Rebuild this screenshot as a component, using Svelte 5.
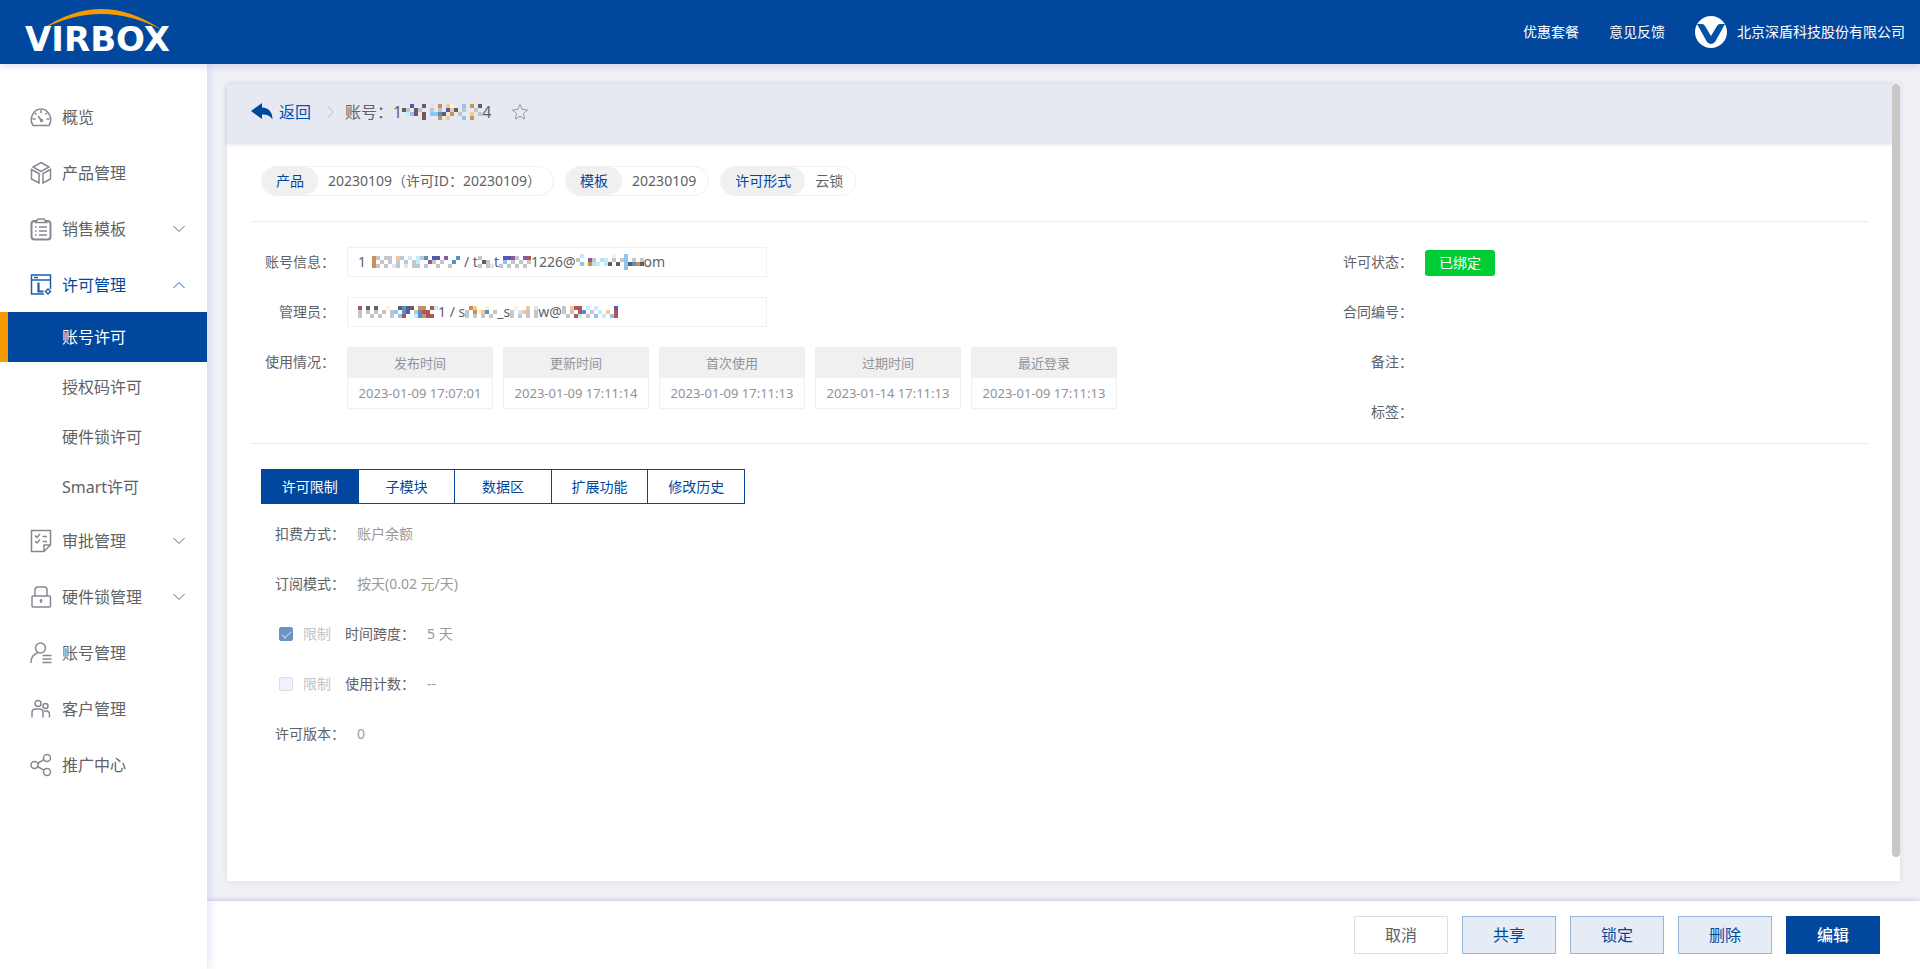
<script>
	let activeTab = '许可限制';

	const menu = [
		{ name: '概览', icon: 'gauge' },
		{ name: '产品管理', icon: 'box' },
		{ name: '销售模板', icon: 'clipboard', arrow: 'down' },
		{
			name: '许可管理',
			icon: 'license',
			arrow: 'up',
			children: ['账号许可', '授权码许可', '硬件锁许可', 'Smart许可']
		},
		{ name: '审批管理', icon: 'approve', arrow: 'down' },
		{ name: '硬件锁管理', icon: 'lock', arrow: 'down' },
		{ name: '账号管理', icon: 'account' },
		{ name: '客户管理', icon: 'customer' },
		{ name: '推广中心', icon: 'share' }
	];

	const tags = [
		{ label: '产品', value: '20230109（许可ID：20230109）' },
		{ label: '模板', value: '20230109' },
		{ label: '许可形式', value: '云锁' }
	];

	const usage = [
		{ label: '发布时间', value: '2023-01-09 17:07:01' },
		{ label: '更新时间', value: '2023-01-09 17:11:14' },
		{ label: '首次使用', value: '2023-01-09 17:11:13' },
		{ label: '过期时间', value: '2023-01-14 17:11:13' },
		{ label: '最近登录', value: '2023-01-09 17:11:13' }
	];

	const tabs = ['许可限制', '子模块', '数据区', '扩展功能', '修改历史'];

	// masked parts of private values, one letter per 4px tile
	const palette = {
		k: '#5f6062',
		g: '#c4c6cb',
		e: '#e3e4e7',
		b: '#5590cc',
		s: '#8cc4f2',
		l: '#c3ecff',
		n: '#5558b0',
		p: '#8a5a9c',
		o: '#c8935a',
		c: '#f5c98f',
		y: '#fdf3cc',
		r: '#b05454',
		m: '#7b5658',
		t: '#c3e2dc'
	};

	const masks = {
		title: ['..n..m.e.o.cy..s.o.k', 'kg.kg..g.g.nck.g..g.', '.lsm.m.ssbk.o.g..c.g', '.....m...o.c...s.o..'],
		phone: ['og.gg.cg.l.lgb.nn.p..b', 'o.g.g.g.g.gl..pg.g..b.', 'og.g.eg.e.gg.g..g..g..'],
		mailName: ['g...', '.kg.', 'g.ge'],
		mailYear: ['.nnpg.pr', '.s.g.g.g', 'g.g.g.g.'],
		mailHost: ['.l.......y..s....', 'g..pg.tl.g.gs.g.g', '.syotl.lk.k.skbok', '............s....'],
		admin: ['r.k.k..y..kbkk.oo.rl', 'g.g.g.g.gs.bn.gbrr..', 'g..g.g..g.sr..lborr.'],
		adminMid: ['.oc..y..', 'g.oycb.g', 'g.g.g.g.'],
		adminName: ['.y..c.e', 'g.lcg.g', 'g.g.g.g'],
		adminHost: ['g.crr.l.l....n', 'g.g.rb.g.l.c.r', '.g.rl.g.s.l.sr']
	};
</script>

{#snippet mosaic(rows)}
	<svg class="mosaic" width={rows[0].length * 4} height={rows.length * 4} aria-hidden="true">
		{#each rows as row, y}
			{#each row.split('') as tile, x}
				{#if palette[tile]}
					<rect x={x * 4} y={y * 4} width="4" height="4" fill={palette[tile]} />
				{/if}
			{/each}
		{/each}
	</svg>
{/snippet}

{#snippet menuIcon(name)}
	<svg class="menu-icon" viewBox="0 0 22 24" width="22" height="24">
		{#if name === 'gauge'}
			<path d="M3 20.5C1 17.5 .8 13 2.6 9.600C4.300 6.200 7.500 4 11 4s6.700 2.200 8.400 5.600C21.200 13 21 17.500 19 20.500Z" />
			<path d="M11 5v3M5 8l1.500 1.500M17 8l-1.500 1.500M2.500 14h3M16.500 14h3M8 11l3 4" />
			<circle cx="11.500" cy="15.500" r="1" />
		{:else if name === 'box'}
			<path d="M11 1.500 19 6l-8 4.500L3 6ZM1.500 8.500l7.500 4v9.500l-7.500-4ZM20.500 8.500l-7.500 4v9.500l7.500-4Z" />
		{:else if name === 'clipboard'}
			<rect x="1.500" y="4" width="19" height="18.500" rx="3" stroke-width="2" />
			<path d="M5.500 5.500 8 2h6l2.500 3.500Z" fill="#fff" />
			<path d="M5 10h1.500M9 10h8M5 14h1.500M9 14h8M5 18h1.500M9 18h8" />
		{:else if name === 'license'}
			<path d="M14 21H1.500V2h19v14M1.500 7h19M4 4.500h4" />
			<path d="M8.500 9.500v9h5" stroke-width="2.200" />
			<path d="m18 16 2.500 2.500L18 21l-2.500-2.500Z" />
		{:else if name === 'approve'}
			<path d="M14 22.500H1.500v-21h19V16ZM14 22.500V16h6.500" />
			<path d="m5 6.500 2 2L10 5m-5 7 2 2 3-3.500M12.500 7.500H17M12.500 12.500H17" />
		{:else if name === 'lock'}
			<rect x="2" y="11" width="18.500" height="11" rx="1" />
			<path d="M5 11V5q0-3 3-3h6q3 0 3 3v6M11 15.500V18" />
			<circle cx="11" cy="15.500" r=".7" />
		{:else if name === 'account'}
			<circle cx="10.500" cy="7" r="5" />
			<path d="M1 22c0-5 2.500-9 7-10.500M12.500 14.500h9M12.500 18h9M12.500 21.500h9" />
		{:else if name === 'customer'}
			<circle cx="8" cy="6.500" r="3" />
			<circle cx="15.500" cy="9" r="2.500" />
			<path d="M2 20.500v-5q0-3.500 3.500-3.500h4q3.500 0 3.500 3.500v5M14 14h2q3.500 0 3.500 3.500v3" />
		{:else if name === 'share'}
			<circle cx="4.500" cy="12" r="3.500" />
			<circle cx="17" cy="5" r="3.500" />
			<circle cx="17" cy="19" r="3.500" />
			<path d="m7.500 10.500 6-3.700M7.500 13.500l6.200 3.700" />
		{/if}
	</svg>
{/snippet}

<div class="page">
	<header class="topbar">
		<a class="logo" href="#home" aria-label="VIRBOX">
			<svg width="180" height="64" viewBox="0 0 180 64">
				<path d="M26 30Q86-12 147 30Q86-2 26 30Z" fill="#f59a00" />
				<text x="10" y="51">VIRBOX</text>
			</svg>
		</a>
		<nav class="top-links">
			<a href="#plans">优惠套餐</a>
			<a href="#feedback">意见反馈</a>
			<a class="company" href="#company">
				<svg width="32" height="32" viewBox="0 0 32 32">
					<circle cx="16" cy="16" r="16" fill="#fff" />
					<path d="M2 8h5q2 0 3 2l6 10 6-10q1-2 3-2h5L20 26q-4 4-8 0Z" fill="#0252a4" />
				</svg>
				<span>北京深盾科技股份有限公司</span>
			</a>
		</nav>
	</header>

	<div class="body">
		<aside class="sidebar">
			{#each menu as item}
				<a class="menu-item" class:open={item.children} href="#menu">
					{@render menuIcon(item.icon)}
					<span class="menu-name">{item.name}</span>
					{#if item.arrow}
						<svg class="arrow" width="12" height="8" viewBox="0 0 12 8">
							<path d={item.arrow === 'up' ? 'M0.500 7 6 1.500 11.500 7' : 'M0.500 1 6 6.500 11.500 1'} />
						</svg>
					{/if}
				</a>
				{#if item.children}
					{#each item.children as child, i}
						<a class="sub-item" class:active={i === 0} href="#license">{child}</a>
					{/each}
				{/if}
			{/each}
		</aside>

		<div class="right">
			<main class="main">
				<div class="card">
					<div class="card-content">
						<div class="card-header">
							<a class="back" href="#back">
								<svg width="22" height="18" viewBox="0 0 22 18">
									<path d="M0 8 11 0v4.500C18 5 21.500 9 21.500 16.500 19 12.500 16 11.500 11 11.500V16Z" />
								</svg>
								<span>返回</span>
							</a>
							<svg class="separator" width="7" height="12" viewBox="0 0 7 12">
								<path d="m1 .5 5 5.500-5 5.500" />
							</svg>
							<span class="account">账号：1{@render mosaic(masks.title)}4</span>
							<button class="star" aria-label="收藏">
								<svg width="18" height="18" viewBox="0 0 18 18">
									<path d="m9 1.500 2.200 4.900 5.300.6-4 3.600 1.100 5.400L9 13.400 4.400 16l1.100-5.400-4-3.600 5.300-.6Z" />
								</svg>
							</button>
						</div>

						<div class="card-body">
							<div class="tags">
								{#each tags as tag}
									<div class="tag">
										<span class="tag-label">{tag.label}</span>
										<span class="tag-value">{tag.value}</span>
									</div>
								{/each}
							</div>

							<section class="info">
								<div class="info-column">
									<div class="row">
										<span class="label">账号信息：</span>
										<div class="value-box">
											<span>1</span>
											{@render mosaic(masks.phone)}
											<span>/ t</span>
											{@render mosaic(masks.mailName)}
											<span>t</span>
											{@render mosaic(masks.mailYear)}
											<span>1226@</span>
											{@render mosaic(masks.mailHost)}
											<span>om</span>
										</div>
									</div>
									<div class="row">
										<span class="label">管理员：</span>
										<div class="value-box">
											{@render mosaic(masks.admin)}
											<span>1 / s</span>
											{@render mosaic(masks.adminMid)}
											<span>_s</span>
											{@render mosaic(masks.adminName)}
											<span>w@</span>
											{@render mosaic(masks.adminHost)}
										</div>
									</div>
									<div class="row">
										<span class="label">使用情况：</span>
										<div class="usage">
											{#each usage as item}
												<dl>
													<dt>{item.label}</dt>
													<dd>{item.value}</dd>
												</dl>
											{/each}
										</div>
									</div>
								</div>
								<div class="info-column">
									<div class="row">
										<span class="label">许可状态：</span>
										<span class="badge">已绑定</span>
									</div>
									<div class="row"><span class="label">合同编号：</span></div>
									<div class="row"><span class="label">备注：</span></div>
									<div class="row"><span class="label">标签：</span></div>
								</div>
							</section>

							<div class="tabs" role="tablist">
								{#each tabs as tab}
									<button
										role="tab"
										aria-selected={activeTab === tab}
										class:active={activeTab === tab}
										on:click={() => (activeTab = tab)}>{tab}</button
									>
								{/each}
							</div>

							<section class="limits">
								<div class="row"><span class="label">扣费方式：</span><span>账户余额</span></div>
								<div class="row"><span class="label">订阅模式：</span><span>按天(0.02 元/天)</span></div>
								<div class="row">
									<label class="check"><input type="checkbox" checked disabled />限制</label>
									<span class="label">时间跨度：</span><span>5 天</span>
								</div>
								<div class="row">
									<label class="check"><input type="checkbox" disabled />限制</label>
									<span class="label">使用计数：</span><span>--</span>
								</div>
								<div class="row"><span class="label">许可版本：</span><span>0</span></div>
							</section>
						</div>
					</div>
					<div class="scrollbar"><div class="thumb"></div></div>
				</div>
			</main>

			<footer class="actions">
				<button class="plain">取消</button>
				<button>共享</button>
				<button>锁定</button>
				<button>删除</button>
				<button class="primary">编辑</button>
			</footer>
		</div>
	</div>
</div>

<style>
	:global(body) {
		margin: 0;
	}

	.page {
		min-height: 100vh;
		display: flex;
		flex-direction: column;
		font-family: 'Noto Sans', 'Noto Sans CJK SC', sans-serif;
		font-size: 14px;
		line-height: 20px;
		color: #606266;
		background: #f0f1f6;
	}

	.page * {
		box-sizing: border-box;
	}

	a {
		color: inherit;
		text-decoration: none;
	}

	button {
		font-family: inherit;
		cursor: pointer;
	}

	svg {
		display: block;
		flex: none;
	}

	.topbar {
		position: relative;
		z-index: 2;
		height: 64px;
		display: flex;
		align-items: center;
		justify-content: space-between;
		padding: 0 15px;
		background: #00479d;
		color: #fff;
		box-shadow: 0 2px 8px rgba(90, 80, 200, 0.2);
	}

	.logo text {
		font-family: 'DejaVu Sans', sans-serif;
		font-size: 34px;
		font-weight: 700;
		fill: #fff;
	}

	.top-links {
		display: flex;
		align-items: center;
		gap: 30px;
	}

	.company {
		display: flex;
		align-items: center;
		gap: 10px;
	}

	.body {
		flex: 1;
		display: flex;
	}

	.sidebar {
		position: relative;
		z-index: 1;
		flex: none;
		width: 207px;
		padding-top: 24px;
		background: #fff;
		box-shadow: 2px 0 8px rgba(90, 80, 200, 0.16);
		font-size: 16px;
	}

	.menu-item {
		height: 56px;
		display: flex;
		align-items: center;
		padding: 2px 22px 0 30px;
	}

	.menu-icon {
		margin-right: 10px;
		fill: none;
		stroke: #85898f;
		stroke-width: 1.5;
	}

	.menu-name {
		flex: 1;
	}

	.arrow {
		fill: none;
		stroke: #606266;
	}

	.open {
		color: #00479d;
	}

	.open .menu-icon,
	.open .arrow {
		stroke: #1f5fa9;
	}

	.sub-item {
		height: 50px;
		display: flex;
		align-items: center;
		padding-left: 62px;
	}

	.sub-item.active {
		padding-left: 54px;
		border-left: 8px solid #f59a00;
		background: #00479d;
		color: #fff;
	}

	.right {
		flex: 1;
		min-width: 0;
		display: flex;
		flex-direction: column;
	}

	.main {
		flex: 1;
		display: flex;
		padding: 20px;
	}

	.card {
		flex: 1;
		display: flex;
		background: #fff;
		box-shadow: 0 0 8px rgba(0, 0, 0, 0.08);
	}

	.card-content {
		flex: 1;
		min-width: 0;
	}

	.scrollbar {
		width: 8px;
	}

	.thumb {
		height: 97%;
		border-radius: 4px;
		background: #c8c8c8;
	}

	.card-header {
		height: 59px;
		display: flex;
		align-items: center;
		padding: 0 24px 3px;
		background: #e6e9f2;
		box-shadow: 0 1px 4px rgba(0, 71, 157, 0.2);
		font-size: 16px;
	}

	.back {
		display: flex;
		align-items: center;
		gap: 6px;
		color: #0052b4;
	}

	.back svg {
		fill: #00479d;
	}

	.separator {
		margin: 0 11px 0 16px;
		fill: none;
		stroke: #b4b8c0;
	}

	.account {
		display: flex;
		align-items: center;
	}

	.star {
		margin-left: 20px;
		padding: 0;
		border: 0;
		background: none;
		fill: none;
		stroke: #96999f;
	}

	.card-body {
		padding: 23px 24px 30px;
	}

	.tags {
		display: flex;
		gap: 11px;
		padding: 0 10px 25px;
		border-bottom: 1px solid #ececec;
	}

	.tag {
		height: 30px;
		display: flex;
		align-items: center;
		border: 1px solid #f0f0f0;
		border-radius: 15px;
	}

	.tag-label {
		padding: 4px 14px;
		border-radius: 14px;
		background: #f0f0f0;
		color: #00479d;
	}

	.tag-value {
		padding: 0 12px 0 10px;
	}

	.info {
		display: grid;
		grid-template-columns: 2fr 1fr;
		padding: 25px 0 16px;
		border-bottom: 1px solid #ececec;
	}

	.info-column {
		display: flex;
		flex-direction: column;
		gap: 20px;
		padding-left: 14px;
	}

	.row {
		display: flex;
		align-items: center;
		gap: 12px;
		min-height: 30px;
	}

	.info .row {
		align-items: flex-start;
	}

	.label {
		flex: none;
		width: 70px;
		color: #606266;
		text-align: right;
	}

	.info .label {
		line-height: 30px;
	}

	.value-box {
		width: 420px;
		height: 30px;
		display: flex;
		align-items: center;
		padding: 0 10px;
		border: 1px solid #f0f0f0;
		white-space: pre;
	}

	.value-box span + .mosaic:nth-child(2) {
		margin: 0 4px 0 6px;
	}

	.usage {
		display: flex;
		gap: 10px;
	}

	.usage dl {
		width: 146px;
		margin: 0;
		border: 1px solid #f0f0f0;
		font-size: 13px;
		line-height: 30px;
		text-align: center;
		white-space: nowrap;
		color: #909399;
	}

	.usage dt {
		background: #f0f0f0;
	}

	.usage dd {
		margin: 0;
	}

	.badge {
		margin-top: 3px;
		padding: 3px 14px;
		border-radius: 3px;
		background: #00cc33;
		color: #fff;
	}

	.tabs {
		width: 484px;
		display: flex;
		margin: 25px 10px 15px;
		border: 1px solid #00479d;
	}

	.tabs button {
		flex: 1;
		height: 33px;
		padding: 0 0 2px;
		border: 0;
		background: #fff;
		color: #00479d;
		font-size: 14px;
	}

	.tabs button + button {
		border-left: 1px solid #00479d;
	}

	.tabs button.active {
		background: #00479d;
		color: #fff;
	}

	.limits {
		display: flex;
		flex-direction: column;
		gap: 20px;
		padding-left: 24px;
		color: #999;
	}

	.check {
		display: flex;
		align-items: center;
		gap: 10px;
		padding: 0 2px 0 4px;
		color: #c0c4cc;
	}

	.check input {
		appearance: none;
		width: 14px;
		height: 14px;
		margin: 0;
		border: 1px solid #dcdfe6;
		border-radius: 2px;
		background: #edf2fc;
	}

	.check input:checked {
		border-color: #6b93c6;
		background: #6b93c6;
	}

	.check input:checked::after {
		content: '';
		display: block;
		width: 4px;
		height: 8px;
		margin: 1px 0 0 4px;
		border: solid #d5dbe6;
		border-width: 0 1px 1px 0;
		transform: rotate(45deg);
	}

	.actions {
		height: 68px;
		display: flex;
		align-items: center;
		justify-content: flex-end;
		gap: 14px;
		padding: 0 40px;
		background: #fff;
		box-shadow: 0 -1px 4px rgba(0, 40, 157, 0.2);
	}

	.actions button {
		width: 94px;
		height: 38px;
		padding: 0 0 2px;
		border: 1px solid #99b5d8;
		background: #e5ecf5;
		color: #00479d;
		font-size: 16px;
	}

	.actions button.plain {
		border-color: #dcdfe6;
		background: #fff;
		color: #606266;
	}

	.actions button.primary {
		border-color: #00479d;
		background: #00479d;
		color: #fff;
		font-weight: 500;
	}
</style>
